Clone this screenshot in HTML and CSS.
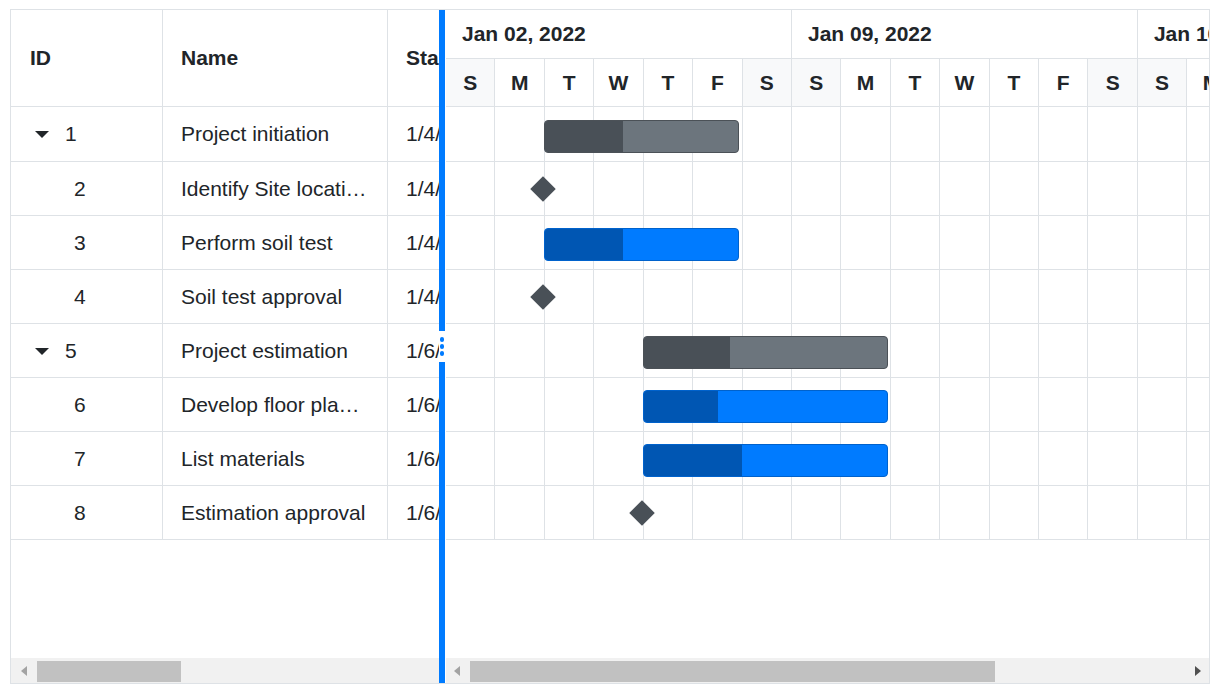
FILE: index.html
```html
<!DOCTYPE html>
<html lang="en">
<head>
<meta charset="utf-8">
<title>Gantt</title>
<link rel="stylesheet" href="styles.css">
</head>
<body>
<div class="gantt">
  <div class="grid-pane">
    <div class="grid-head">
      <div class="cell col-id">ID</div>
      <div class="cell col-name">Name</div>
      <div class="cell col-start">Start Date</div>
    </div>
    <div class="grid-body">
      <div class="grid-row"><div class="cell col-id"><span class="caret"></span>1</div><div class="cell col-name"><span class="txt">Project initiation</span></div><div class="cell col-start">1/4/2022</div></div>
      <div class="grid-row"><div class="cell col-id"><span class="indent"></span>2</div><div class="cell col-name"><span class="txt">Identify Site location</span></div><div class="cell col-start">1/4/2022</div></div>
      <div class="grid-row"><div class="cell col-id"><span class="indent"></span>3</div><div class="cell col-name"><span class="txt">Perform soil test</span></div><div class="cell col-start">1/4/2022</div></div>
      <div class="grid-row"><div class="cell col-id"><span class="indent"></span>4</div><div class="cell col-name"><span class="txt">Soil test approval</span></div><div class="cell col-start">1/4/2022</div></div>
      <div class="grid-row"><div class="cell col-id"><span class="caret"></span>5</div><div class="cell col-name"><span class="txt">Project estimation</span></div><div class="cell col-start">1/6/2022</div></div>
      <div class="grid-row"><div class="cell col-id"><span class="indent"></span>6</div><div class="cell col-name"><span class="txt">Develop floor plan for estimation</span></div><div class="cell col-start">1/6/2022</div></div>
      <div class="grid-row"><div class="cell col-id"><span class="indent"></span>7</div><div class="cell col-name"><span class="txt">List materials</span></div><div class="cell col-start">1/6/2022</div></div>
      <div class="grid-row"><div class="cell col-id"><span class="indent"></span>8</div><div class="cell col-name"><span class="txt">Estimation approval</span></div><div class="cell col-start">1/6/2022</div></div>
    </div>
    <div class="hscroll">
      <span class="arr-left"></span>
      <span class="thumb thumb-grid"></span>
    </div>
  </div>

  <div class="splitter">
    <div class="handle"><span></span><span></span><span></span></div>
  </div>

  <div class="chart-pane">
    <div class="timeline">
      <div class="tier-top">
        <div class="week">Jan 02, 2022</div>
        <div class="week">Jan 09, 2022</div>
        <div class="week">Jan 16, 2022</div>
      </div>
      <div class="tier-bottom">
        <div class="day we">S</div><div class="day">M</div><div class="day">T</div><div class="day">W</div><div class="day">T</div><div class="day">F</div><div class="day we">S</div>
        <div class="day we">S</div><div class="day">M</div><div class="day">T</div><div class="day">W</div><div class="day">T</div><div class="day">F</div><div class="day we">S</div>
        <div class="day we">S</div><div class="day">M</div><div class="day">T</div><div class="day">W</div><div class="day">T</div><div class="day">F</div><div class="day we">S</div>
      </div>
    </div>
    <div class="chart-body">
      <div class="chart-stack">
        <div class="day-cols">
          <i></i><i></i><i></i><i></i><i></i><i></i><i></i>
          <i></i><i></i><i></i><i></i><i></i><i></i><i></i>
          <i></i><i></i><i></i><i></i><i></i><i></i><i></i>
        </div>
        <div class="task-rows">
          <div class="trow"><div class="bar parent" style="margin-left:98px;width:195px"><div class="prog" style="width:78px"></div></div></div>
          <div class="trow"><div class="ms" style="margin-left:88px"></div></div>
          <div class="trow"><div class="bar child" style="margin-left:98px;width:195px"><div class="prog" style="width:78px"></div></div></div>
          <div class="trow"><div class="ms" style="margin-left:88px"></div></div>
          <div class="trow"><div class="bar parent" style="margin-left:197px;width:245px"><div class="prog" style="width:86px"></div></div></div>
          <div class="trow"><div class="bar child" style="margin-left:197px;width:245px"><div class="prog" style="width:74px"></div></div></div>
          <div class="trow"><div class="bar child" style="margin-left:197px;width:245px"><div class="prog" style="width:98px"></div></div></div>
          <div class="trow"><div class="ms" style="margin-left:187px"></div></div>
        </div>
      </div>
    </div>
    <div class="hscroll">
      <span class="arr-left arr-chart"></span>
      <span class="thumb thumb-chart"></span>
      <span class="arr-right"></span>
    </div>
  </div>
</div>
</body>
</html>
```

FILE: styles.css
```css
html, body {
  margin: 0;
  padding: 0;
  background: #fff;
}

body {
  font-family: "Liberation Sans", Arial, sans-serif;
  font-size: 21px;
  color: #212529;
}

.gantt {
  margin: 9px 0 0 10px;
  width: 1200px;
  height: 675px;
  box-sizing: border-box;
  border: 1px solid #dee2e6;
  display: flex;
  overflow: hidden;
}

/* ---------- left grid ---------- */
.grid-pane {
  width: 428px;
  flex: none;
  display: flex;
  flex-direction: column;
  overflow: hidden;
}

.grid-head {
  height: 97px;
  box-sizing: border-box;
  border-bottom: 1px solid #dee2e6;
  display: flex;
  flex: none;
  font-weight: bold;
}

.grid-body {
  flex: 1;
}

.grid-row {
  height: 54px;
  box-sizing: border-box;
  border-bottom: 1px solid #dee2e6;
  display: flex;
}

.grid-row:first-child {
  height: 55px;
}

.cell {
  flex: none;
  box-sizing: border-box;
  display: flex;
  align-items: center;
  padding: 0 18px;
  white-space: nowrap;
  overflow: hidden;
}

.col-id {
  width: 152px;
  padding-left: 19px;
  border-right: 1px solid #dee2e6;
}

.col-name {
  width: 225px;
  padding-right: 20px;
  border-right: 1px solid #dee2e6;
}

.col-start {
  width: 200px;
}

.txt {
  display: block;
  overflow: hidden;
  text-overflow: ellipsis;
  white-space: nowrap;
  min-width: 0;
}

.caret {
  width: 0;
  height: 0;
  border-left: 7.5px solid transparent;
  border-right: 7.5px solid transparent;
  border-top: 7.5px solid #212529;
  margin: 1px 16px 0 5px;
}

.indent {
  width: 44px;
  flex: none;
}

/* ---------- scrollbars ---------- */
.hscroll {
  height: 25px;
  flex: none;
  background: #f1f1f1;
  display: flex;
  align-items: center;
}

.arr-left {
  width: 0;
  height: 0;
  border-top: 5.5px solid transparent;
  border-bottom: 5.5px solid transparent;
  border-right: 6px solid #a3a3a3;
  margin-left: 10px;
}

.arr-chart {
  margin-left: 8px;
}

.arr-right {
  width: 0;
  height: 0;
  border-top: 5.5px solid transparent;
  border-bottom: 5.5px solid transparent;
  border-left: 6px solid #505050;
  margin-left: auto;
  margin-right: 8px;
}

.thumb {
  height: 21px;
  background: #c1c1c1;
  margin-left: 10px;
  margin-top: 1px;
}

.thumb-grid {
  width: 144px;
}

.thumb-chart {
  width: 525px;
}

/* ---------- splitter ---------- */
.splitter {
  width: 6px;
  flex: none;
  background: #007bff;
  display: flex;
  flex-direction: column;
  justify-content: center;
}

.handle {
  height: 31px;
  background: #fff;
  display: flex;
  flex-direction: column;
  align-items: center;
  justify-content: center;
  gap: 2.5px;
}

.handle span {
  width: 4.5px;
  height: 4.5px;
  border-radius: 50%;
  background: #007bff;
}

/* ---------- chart ---------- */
.chart-pane {
  flex: 1;
  min-width: 0;
  padding-left: 1px;
  display: flex;
  flex-direction: column;
  overflow: hidden;
}

.timeline {
  flex: none;
  font-weight: bold;
}

.tier-top,
.tier-bottom,
.day-cols {
  display: grid;
  grid-template-columns: repeat(21, 49.43px);
}

.tier-top {
  height: 49px;
  box-sizing: border-box;
  border-bottom: 1px solid #dee2e6;
}

.week {
  grid-column: span 7;
  border-right: 1px solid #dee2e6;
  display: flex;
  align-items: center;
  padding-left: 16px;
  white-space: nowrap;
  overflow: hidden;
}

.tier-bottom {
  height: 48px;
  box-sizing: border-box;
  border-bottom: 1px solid #dee2e6;
}

.day {
  border-right: 1px solid #dee2e6;
  display: flex;
  align-items: center;
  justify-content: center;
}

.day.we {
  background: #f8f9fa;
}

.chart-body {
  flex: 1;
  overflow: hidden;
}

.chart-stack {
  display: grid;
}

.day-cols,
.task-rows {
  grid-area: 1 / 1;
}

.day-cols i {
  border-right: 1px solid #dee2e6;
}

.trow {
  height: 54px;
  box-sizing: border-box;
  border-bottom: 1px solid #dee2e6;
  padding-top: 12px;
}

.trow:first-child {
  height: 55px;
  padding-top: 13px;
}

.bar {
  height: 33px;
  box-sizing: border-box;
  border: 1px solid;
  border-radius: 4px;
  overflow: hidden;
}

.bar .prog {
  height: 100%;
}

.bar.parent {
  background: #6c757d;
  border-color: #4b5157;
}

.bar.parent .prog {
  background: #495057;
}

.bar.child {
  background: #007bff;
  border-color: #0062cc;
}

.bar.child .prog {
  background: #0056b3;
}

.ms {
  width: 18px;
  height: 18px;
  margin-top: 6px;
  background: #495057;
  transform: rotate(45deg);
}
```
